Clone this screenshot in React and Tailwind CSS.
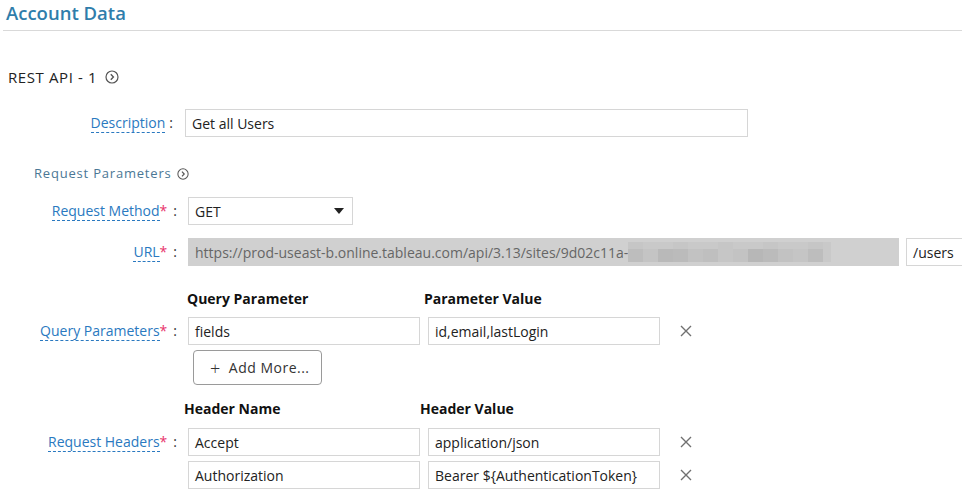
import React from 'react';

const blur = [
    ['#bdbdbd', 15], ['#c4c4c4', 15], ['#b9b9b9', 15], ['#bbbbbb', 15], ['#c2c2c2', 15],
    ['#bfbfbf', 15], ['#c6c6c6', 15], ['#c3c3c3', 15], ['#b7b7b7', 15], ['#bbbbbb', 15],
    ['#c2c2c2', 15], ['#c5c5c5', 15], ['#bdbdbd', 15], ['#c9c9c9', 8],
];

function CircleArrow({ size = 13 }) {
    return (
        <svg width={size} height={size} viewBox="0 0 14 14" className="inline-block">
            <circle cx="7" cy="7" r="6" fill="none" stroke="#555" strokeWidth="1.2" />
            <path d="M5.8 4.3 L8.4 7 L5.8 9.7" fill="none" stroke="#555" strokeWidth="1.4" />
        </svg>
    );
}

function XIcon() {
    return (
        <svg width="12" height="12" viewBox="0 0 12 12" className="ml-[20px] shrink-0">
            <path d="M1 1 L11 11 M11 1 L1 11" stroke="#707070" strokeWidth="1.4" />
        </svg>
    );
}

function Label({ text, required = true }) {
    return (
        <div className="w-[178px] shrink-0 text-right text-[14px] leading-[20px] pr-[1px]">
            <span className="text-[#2a79c0] border-b border-dashed border-[#2a79c0]">{text}</span>
            {required && <span className="text-[#e8336b]">*</span>}
            <span className="text-[#333] ml-[6px]">:</span>
        </div>
    );
}

function Field({ value, className = 'w-[232px]' }) {
    return (
        <div className={`h-[28px] border border-[#d6d6d6] bg-white px-[6px] flex items-center text-[14px] text-[#222] ${className}`}>
            {value}
        </div>
    );
}

function App() {
    return (
        <div className="w-[962px] h-[494px] bg-white overflow-hidden font-['Open_Sans',sans-serif]">
            <div className="h-[30px] px-[6px] pt-[1px]">
                <span className="text-[18.5px] font-semibold leading-[24px] text-[#2f7dab]">Account Data</span>
            </div>
            <div className="ml-[3px] h-px bg-[#d9d9d9]" />

            <div className="mt-[36px] ml-[8px] h-[20px] flex items-center gap-[8px] text-[15px] text-[#222] tracking-[0.6px]">
                REST API - 1 <CircleArrow size={14} />
            </div>

            <div className="mt-[22px] flex items-center">
                <div className="w-[173px] shrink-0 text-right text-[14px] leading-[20px]">
                    <span className="text-[#2a79c0] border-b border-dashed border-[#2a79c0]">Description</span>
                    <span className="text-[#333] ml-[4px]">:</span>
                </div>
                <Field value="Get all Users" className="ml-[12px] w-[563px]" />
            </div>

            <div className="mt-[27px] ml-[34px] h-[20px] flex items-center gap-[5px] text-[13px] text-[#4b7795] tracking-[0.8px]">
                Request Parameters <CircleArrow size={12} />
            </div>

            <div className="mt-[13px] flex items-center">
                <Label text="Request Method" />
                <div className="ml-[10px] w-[165px] h-[28px] border border-[#d6d6d6] px-[6px] flex items-center justify-between text-[14px] text-[#222]">
                    GET
                    <svg width="10" height="6" viewBox="0 0 10 6" className="mr-[2px]"><path d="M0 0 L10 0 L5 6 Z" fill="#222" /></svg>
                </div>
            </div>

            <div className="mt-[13px] flex items-center">
                <Label text="URL" />
                <div className="ml-[10px] w-[711px] h-[28px] border border-[#d0d0d0] bg-[#d0d0d0] px-[6px] flex items-center text-[14px] text-[#666] whitespace-nowrap overflow-hidden">
                    https://prod-useast-b.online.tableau.com/api/3.13/sites/9d02c11a-
                    <span className="flex h-[20px] flex-col">
                        <span className="flex h-[7px]">
                            {blur.map(([c, w], i) => (
                                <span key={i} className="h-full" style={{ width: w, background: i % 3 === 0 ? '#c6c6c6' : '#c9c9c9' }} />
                            ))}
                        </span>
                        <span className="flex h-[13px]">
                            {blur.map(([c, w], i) => (
                                <span key={i} className="h-full" style={{ width: w, background: c }} />
                            ))}
                        </span>
                    </span>
                </div>
                <div className="ml-[7px] h-[28px] flex-1 border border-[#d6d6d6] border-r-0 px-[6px] flex items-center text-[14px] text-[#222]">/users</div>
            </div>

            <div className="mt-[22px] h-[20px] flex items-center text-[14px] font-bold text-[#111]">
                <span className="ml-[187px] w-[237px]">Query Parameter</span>
                <span>Parameter Value</span>
            </div>

            <div className="mt-[9px] flex items-center">
                <Label text="Query Parameters" />
                <div className="ml-[10px] flex items-center gap-[8px]">
                    <Field value="fields" />
                    <Field value="id,email,lastLogin" />
                </div>
                <XIcon />
            </div>

            <div className="mt-[5px] ml-[193px]">
                <button className="w-[129px] h-[35px] border border-[#9a9a9a] rounded-[4px] bg-white flex items-center pl-[16px] gap-[8px] text-[14px] text-[#333] tracking-[0.5px]">
                    <span className="text-[18px] leading-none font-light">+</span> Add More...
                </button>
            </div>

            <div className="mt-[13px] h-[20px] flex items-center text-[14px] font-bold text-[#111]">
                <span className="ml-[184px] w-[236px]">Header Name</span>
                <span>Header Value</span>
            </div>

            <div className="mt-[10px] flex items-center">
                <Label text="Request Headers" />
                <div className="ml-[10px] flex items-center gap-[8px]">
                    <Field value="Accept" />
                    <Field value="application/json" />
                </div>
                <XIcon />
            </div>

            <div className="mt-[5px] flex items-center">
                <div className="w-[178px] shrink-0" />
                <div className="ml-[10px] flex items-center gap-[8px]">
                    <Field value="Authorization" />
                    <Field value="Bearer ${AuthenticationToken}" />
                </div>
                <XIcon />
            </div>
        </div>
    );
}

export default App;
